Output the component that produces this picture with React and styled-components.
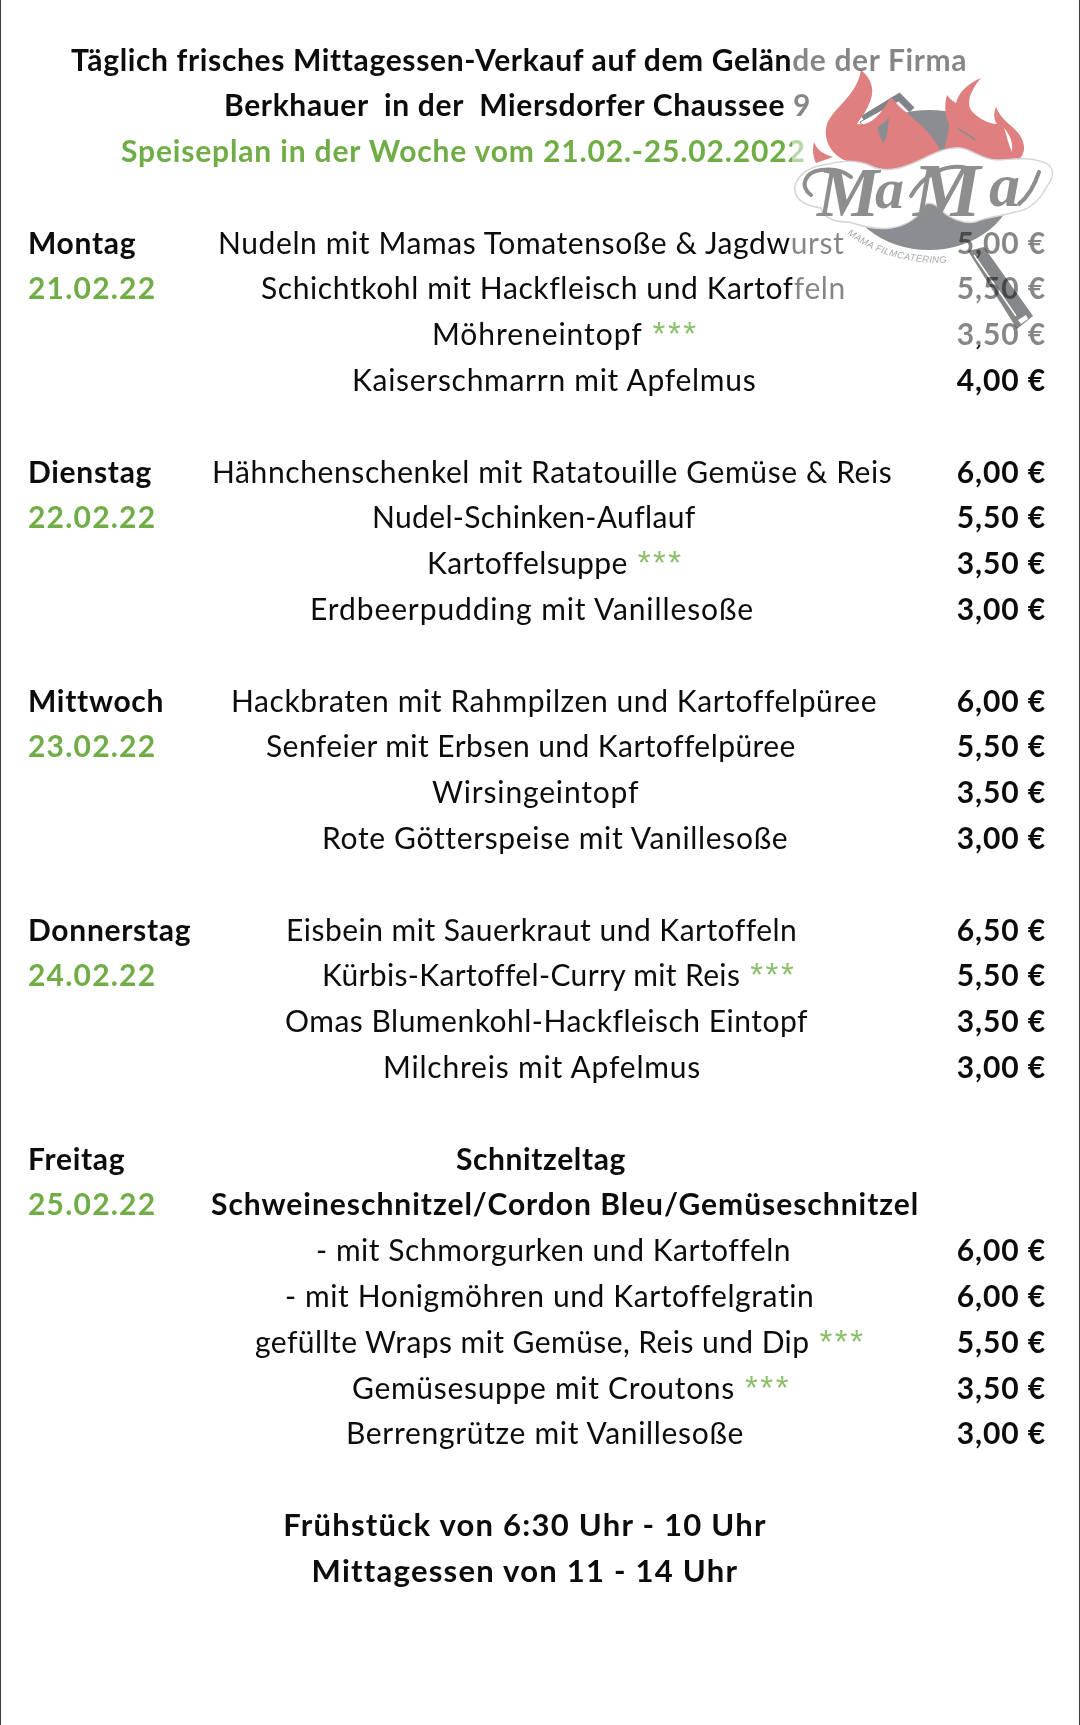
import React from "react";
import styled, { createGlobalStyle } from "styled-components";

const GREEN = "#70ad47";

// dish rows: indent is the distance from the dish column, track the letter spacing where it differs
const days = [
  {
    name: "Montag",
    date: "21.02.22",
    rows: [
      { text: "Nudeln mit Mamas Tomatensoße & Jagdwurst", indent: 9, price: "5,00 €" },
      { text: "Schichtkohl mit Hackfleisch und Kartoffeln", indent: 52, price: "5,50 €" },
      { text: "Möhreneintopf", indent: 223, price: "3,50 €", stars: true, track: 0.94 },
      { text: "Kaiserschmarrn mit Apfelmus", indent: 143, price: "4,00 €", track: 0.72 },
    ],
  },
  {
    name: "Dienstag",
    date: "22.02.22",
    rows: [
      { text: "Hähnchenschenkel mit Ratatouille Gemüse & Reis", indent: 3, price: "6,00 €" },
      { text: "Nudel-Schinken-Auflauf", indent: 163, price: "5,50 €", track: 0.35 },
      { text: "Kartoffelsuppe", indent: 218, price: "3,50 €", stars: true, track: 0.36 },
      { text: "Erdbeerpudding mit Vanillesoße", indent: 101, price: "3,00 €", track: 0.89 },
    ],
  },
  {
    name: "Mittwoch",
    date: "23.02.22",
    rows: [
      { text: "Hackbraten mit Rahmpilzen und Kartoffelpüree", indent: 22, price: "6,00 €" },
      { text: "Senfeier mit Erbsen und Kartoffelpüree", indent: 57, price: "5,50 €", track: 0.43 },
      { text: "Wirsingeintopf", indent: 223, price: "3,50 €", track: 0.84 },
      { text: "Rote Götterspeise mit Vanillesoße", indent: 113, price: "3,00 €", track: 0.67 },
    ],
  },
  {
    name: "Donnerstag",
    date: "24.02.22",
    rows: [
      { text: "Eisbein mit Sauerkraut und Kartoffeln", indent: 77, price: "6,50 €", track: 0.48 },
      { text: "Kürbis-Kartoffel-Curry mit Reis", indent: 113, price: "5,50 €", stars: true, track: 0.35 },
      { text: "Omas Blumenkohl-Hackfleisch Eintopf", indent: 76, price: "3,50 €", track: 0.5 },
      { text: "Milchreis mit Apfelmus", indent: 174, price: "3,00 €", track: 0.8 },
    ],
  },
  {
    name: "Freitag",
    date: "25.02.22",
    rows: [
      { text: "Schnitzeltag", indent: 247, bold: true },
      { text: "Schweineschnitzel/Cordon Bleu/Gemüseschnitzel", indent: 2, bold: true, track: 0.97 },
      { text: "- mit Schmorgurken und Kartoffeln", indent: 107, price: "6,00 €", track: 0.53 },
      { text: "- mit Honigmöhren und Kartoffelgratin", indent: 76, price: "6,00 €" },
      { text: "gefüllte Wraps mit Gemüse, Reis und Dip", indent: 46, price: "5,50 €", stars: true, track: 0.43 },
      { text: "Gemüsesuppe mit Croutons", indent: 143, price: "3,50 €", stars: true, track: 0.69 },
      { text: "Berrengrütze mit Vanillesoße", indent: 137, price: "3,00 €", track: 0.68 },
    ],
  },
];

const App = () => (
  <>
    <GlobalStyle />
    <Page>
      <Header>
        <HeadLine $indent={43}>Täglich frisches Mittagessen-Verkauf auf dem Gelände der Firma</HeadLine>
        <HeadLine $indent={196}>Berkhauer  in der  Miersdorfer Chaussee 9</HeadLine>
        <HeadLine $indent={93} $green>Speiseplan in der Woche vom 21.02.-25.02.2022</HeadLine>
      </Header>
      {days.map((day) => (
        <DayBlock key={day.name}>
          {day.rows.map((row, i) => (
            <Row key={row.text}>
              <DayCell $green={i === 1}>{i === 0 ? day.name : i === 1 ? day.date : ""}</DayCell>
              <Dish $indent={row.indent} $bold={row.bold} $track={row.track}>
                {row.text}
                {row.stars && <Stars>***</Stars>}
              </Dish>
              <Price>{row.price}</Price>
            </Row>
          ))}
        </DayBlock>
      ))}
      <Footer>
        <FootLine>Frühstück von 6:30 Uhr - 10 Uhr</FootLine>
        <FootLine>Mittagessen von 11 - 14 Uhr</FootLine>
      </Footer>
      <LogoVeil>
        <MamaLogo />
      </LogoVeil>
    </Page>
  </>
);

// logo drawn in page coordinates, the viewBox matches its place on the page
const MamaLogo = () => (
  <LogoSvg viewBox="793 40 265 305">
    <ellipse cx="930" cy="180" rx="86" ry="70" fill="#8b8d90" />
    <path d="M864 119 L900 97 L913 110" fill="none" stroke="#808488" strokeWidth="7" />
    <path d="M861 122 L890 106 L896 117 L868 131 Z" fill="#fff" stroke="#808488" strokeWidth="1" />
    <path d="M969 251 L985 247 L1034 316 L1018 329 Z" fill="#85878a" />
    <path d="M975 255 L1017 316" stroke="#fff" strokeWidth="1.4" fill="none" />
    <path d="M1019 320 L1027 315 L1029 319 L1022 324 Z" fill="#fff" />
    {/* flames */}
    <path
      d="M862 70 C874 80 876 92 870 104 C866 114 860 120 858 124 C870 126 880 118 892 97 C900 108 908 112 916 120 C928 130 936 140 942 152 L900 172 L845 160 C830 152 824 138 828 124 C834 108 858 96 862 70 Z"
      fill="#df7f80"
    />
    <path d="M815 142 C818 150 824 154 834 157 L817 163 C814 156 813 150 815 142 Z" fill="#df7f80" />
    <path
      d="M982 78 C970 92 968 104 972 110 C978 118 990 124 998 124 C994 118 995 112 997 107 C1002 120 1012 124 1020 134 C1028 146 1026 154 1018 162 L980 160 L945 150 C948 140 950 130 950 124 C946 116 945 106 948 95 C952 100 955 102 957 103 C960 92 968 84 982 78 Z"
      fill="#df7f80"
    />
    <path d="M1005 128 C1012 136 1014 144 1013 152 C1009 144 1008 136 1005 128 Z" fill="#fff" />
    <path d="M878 128 L890 118 L888 136 L884 144 Z" fill="#8b8d90" />
    <path d="M958 128 C964 132 972 136 976 140" stroke="#8b8d90" strokeWidth="1.5" fill="none" />
    {/* cloud behind the lettering */}
    <path
      d="M796 186 C800 172 812 166 830 164 C842 160 860 160 872 166 C884 172 898 170 912 164 C928 158 944 146 962 148 C974 150 984 160 998 160 C1012 160 1028 156 1044 162 C1056 166 1056 176 1048 186 C1042 198 1032 210 1016 212 C1004 216 990 216 976 222 C964 224 950 218 942 210 C936 204 932 202 926 204 C922 216 908 226 892 228 C878 230 862 226 850 222 C838 222 826 220 822 208 C810 206 794 202 796 186 Z"
      fill="#fff"
      stroke="#d6d6d6"
      strokeWidth="1.5"
    />
    <LogoScript>
      <tspan x="818" y="216" fontSize="70">M</tspan>
      <tspan x="876" y="208" fontSize="58">a</tspan>
      <tspan x="914" y="216" fontSize="76">M</tspan>
      <tspan x="990" y="206" fontSize="62">a</tspan>
    </LogoScript>
    <Swash d="M812 195 C800 186 806 172 822 170 C836 168 846 172 852 177" />
    <Swash d="M912 196 C922 178 944 162 968 168" />
    <Swash d="M1020 204 C1030 196 1036 184 1040 172" />
    <path id="brandArc" d="M848 234 C880 258 920 266 962 262" fill="none" />
    <LogoBrand>
      <textPath href="#brandArc">MAMA FILMCATERING</textPath>
    </LogoBrand>
  </LogoSvg>
);

const GlobalStyle = createGlobalStyle`
  html, body {
    margin: 0;
    padding: 0;
    background: #fff;
  }
`;

const Page = styled.div`
  position: relative;
  box-sizing: border-box;
  width: 1080px;
  height: 1725px;
  overflow: hidden;
  padding: 36.5px 33px 0 27px;
  border-left: 1.5px solid #3c3c3c;
  border-right: 1.5px solid #3c3c3c;
  background: #fff;
  color: #0c0c0c;
  font-family: Lato, "Open Sans", sans-serif;
  font-size: 30px;
  line-height: 45.8px;
  letter-spacing: 0.6px;
  white-space: pre;
`;

const Header = styled.header`
  margin-bottom: 45.8px;
`;

const HeadLine = styled.div`
  padding-left: ${(p) => p.$indent}px;
  font-weight: 700;
  letter-spacing: ${(p) => (p.$green ? 0.84 : 0.64)}px;
  color: ${(p) => (p.$green ? GREEN : "inherit")};
`;

const DayBlock = styled.section`
  margin-bottom: 45.8px;
`;

const Row = styled.div`
  display: grid;
  grid-template-columns: 181px 1fr 90px;
  height: 45.8px;
`;

const DayCell = styled.div`
  font-weight: 700;
  letter-spacing: ${(p) => (p.$green ? 1.2 : 0.7)}px;
  color: ${(p) => (p.$green ? GREEN : "inherit")};
`;

const Dish = styled.div`
  padding-left: ${(p) => p.$indent}px;
  font-weight: ${(p) => (p.$bold ? 700 : 400)};
  letter-spacing: ${(p) => p.$track ?? 0.6}px;
`;

const Stars = styled.span`
  margin-left: 10px;
  color: #8cbf6c;
  font-family: "Liberation Sans", sans-serif;
  font-size: 33px;
  line-height: 0;
  letter-spacing: 2.5px;
`;

const Price = styled.div`
  font-weight: 700;
  letter-spacing: 0.9px;
  text-align: right;
`;

const Footer = styled.footer`
  display: flex;
  flex-direction: column;
  align-items: center;
  padding-right: 24px;
`;

const FootLine = styled.div`
  font-weight: 700;
  font-size: 31px;
  letter-spacing: 1.25px;
`;

// the logo sits on a half white sheet that fades the text under it
const LogoVeil = styled.div`
  position: absolute;
  left: 791px;
  top: 40px;
  width: 265px;
  height: 305px;
  background: rgba(255, 255, 255, 0.5);
`;

const LogoSvg = styled.svg`
  display: block;
  width: 265px;
  height: 305px;
  mix-blend-mode: multiply;
`;

const LogoScript = styled.text`
  font-family: "Liberation Serif", serif;
  font-style: italic;
  font-weight: 700;
  fill: #8e8e8e;
`;

const Swash = styled.path`
  fill: none;
  stroke: #8e8e8e;
  stroke-width: 4;
  stroke-linecap: round;
`;

const LogoBrand = styled.text`
  font-family: "Liberation Sans", sans-serif;
  font-style: italic;
  font-size: 9.5px;
  letter-spacing: 0.3px;
  fill: #a8a8a8;
`;

export default App;
